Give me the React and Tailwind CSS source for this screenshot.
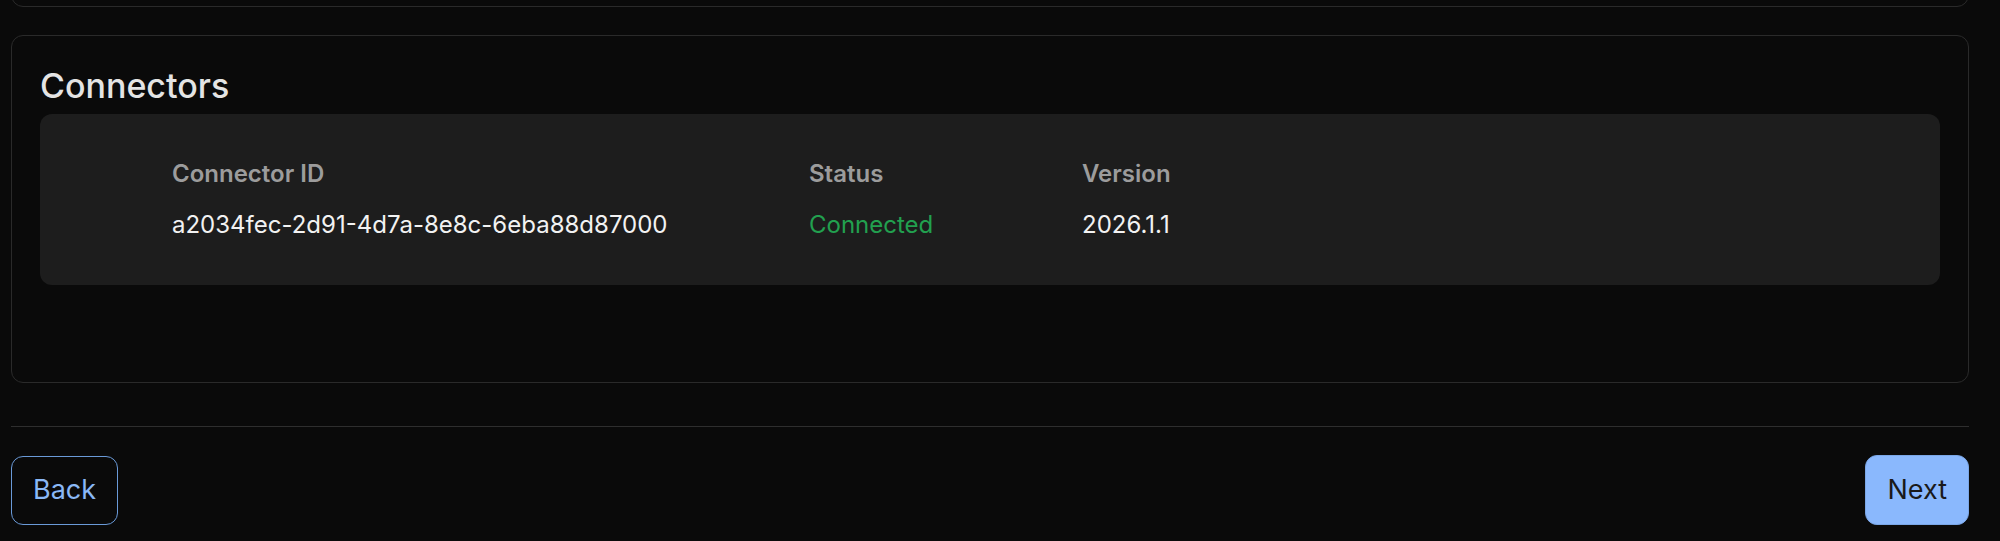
const connectors = [
  { id: 'a2034fec-2d91-4d7a-8e8c-6eba88d87000', status: 'Connected', version: '2026.1.1' },
]

const App = () => {
  return (
    <div
      className="min-h-[541px] bg-[#0a0a0a] pl-[11px] pr-[31px] overflow-hidden"
      style={{ fontFamily: 'Inter, "Noto Sans", sans-serif' }}
    >
      {/* previous card, scrolled mostly out of view */}
      <div className="-mt-[33px] h-[40px] rounded-xl border border-[#2a2a2a]" />

      {/* Connectors card */}
      <div className="mt-[28px] rounded-xl border border-[#2a2a2a] px-[28px] pt-[30px] pb-[97px]">
        <h2 className="text-[34px] leading-[40px] font-medium text-[#e4e4e4]">Connectors</h2>
        <div className="mt-[8px] rounded-xl bg-[#1d1d1d] pl-[132px] py-[43px] text-[24px] leading-[34px]">
          <div className="grid grid-cols-[637px_273px_1fr] font-semibold text-[#9c9c9c]">
            <div>Connector ID</div>
            <div>Status</div>
            <div>Version</div>
          </div>
          {connectors.map((c) => (
            <div key={c.id} className="mt-[17px] grid grid-cols-[637px_273px_1fr] text-[#f2f2f2]">
              <div>{c.id}</div>
              <div className="text-[#22a04f]">{c.status}</div>
              <div>{c.version}</div>
            </div>
          ))}
        </div>
      </div>

      <div className="mt-[43px] border-t border-[#2e2e2e]" />

      <div className="mt-[28px] flex items-center justify-between">
        <button className="h-[69px] px-[21px] rounded-xl border border-[#6a9ad8] text-[27px] text-[#8ab8f6]">
          Back
        </button>
        <button className="h-[70px] px-[21px] rounded-xl border border-[#7aa6e6] bg-[#8ab8fd] text-[27px] text-[#1a1a1a]">
          Next
        </button>
      </div>
    </div>
  )
}

export default App
